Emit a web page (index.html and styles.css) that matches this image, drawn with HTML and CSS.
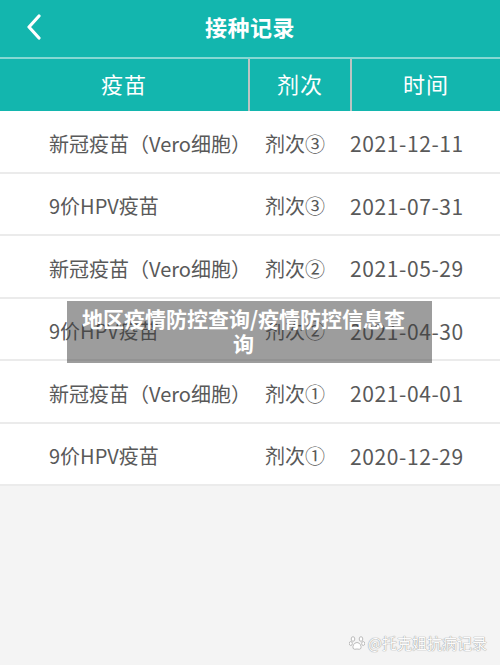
FILE: index.html
```html
<!DOCTYPE html>
<html lang="zh-CN">
<head>
<meta charset="utf-8">
<title>接种记录</title>
<link rel="stylesheet" href="styles.css">
</head>
<body>
<div class="page">
  <header class="topbar">
    <svg class="back" width="18" height="26" viewBox="0 0 18 26"><path d="M14 2 L4 13 L14 24" fill="none" stroke="#fff" stroke-width="3.2" stroke-linecap="round" stroke-linejoin="round"/></svg>
    <h1 class="title">接种记录</h1>
  </header>
  <div class="thead">
    <div class="th">疫苗</div>
    <div class="th th-div">剂次</div>
    <div class="th th-div">时间</div>
  </div>
  <div class="tbody">
    <div class="row"><span>新冠疫苗（Vero细胞）</span><span>剂次③</span><span class="date">2021-12-11</span></div>
    <div class="row"><span>9价HPV疫苗</span><span>剂次③</span><span class="date">2021-07-31</span></div>
    <div class="row"><span>新冠疫苗（Vero细胞）</span><span>剂次②</span><span class="date">2021-05-29</span></div>
    <div class="row"><span>9价HPV疫苗</span><span>剂次②</span><span class="date">2021-04-30</span></div>
    <div class="row"><span>新冠疫苗（Vero细胞）</span><span>剂次①</span><span class="date">2021-04-01</span></div>
    <div class="row"><span>9价HPV疫苗</span><span>剂次①</span><span class="date">2020-12-29</span></div>
  </div>
  <div class="caption">地区疫情防控查询/疫情防控信息查询</div>
  <div class="watermark">
    <svg class="paw" width="16" height="16" viewBox="0 0 16 16"><g fill="#fff" stroke="#bbb" stroke-width="1"><ellipse cx="4" cy="4" rx="1.8" ry="2.3"/><ellipse cx="12" cy="4" rx="1.8" ry="2.3"/><ellipse cx="1.8" cy="8.5" rx="1.5" ry="2"/><ellipse cx="14.2" cy="8.5" rx="1.5" ry="2"/><path d="M8 7.5 C5 7.5 3.5 11 4 13 C4.5 15 7 14 8 14 C9 14 11.5 15 12 13 C12.5 11 11 7.5 8 7.5 Z"/></g></svg>
    <span>@托克姐抗病记录</span>
  </div>
</div>
</body>
</html>
```
FILE: styles.css
```css
* { box-sizing: border-box; }
html, body { margin: 0; padding: 0; }
body {
  font-family: "Noto Sans CJK SC", "Noto Sans", sans-serif;
  background: #f4f4f4;
}
.page {
  position: relative;
  width: 500px;
  height: 665px;
  overflow: hidden;
  background: #f4f4f4;
}
.topbar {
  height: 59px;
  background: #13b6ae;
  display: flex;
  align-items: center;
  justify-content: center;
  position: relative;
  padding-bottom: 6px;
  border-bottom: 2px solid #86d8d3;
}
.back {
  position: absolute;
  left: 25px;
  top: 14px;
}
.title {
  margin: 0;
  color: #fff;
  font-size: 22px;
  font-weight: 700;
  letter-spacing: 0.5px;
}
.thead {
  display: grid;
  grid-template-columns: 248px 102px 1fr;
  height: 52px;
  background: #13b6ae;
}
.th {
  display: flex;
  align-items: center;
  justify-content: center;
  padding-bottom: 5px;
  color: #fff;
  font-size: 22px;
  letter-spacing: 1px;
}
.th-div {
  border-left: 2px solid #bcc4c3;
}
.tbody {
  background: #fff;
}
.row {
  display: grid;
  grid-template-columns: 216px 85px 1fr;
  align-items: center;
  height: 62.5px;
  padding-left: 49px;
  padding-top: 4px;
  border-bottom: 2px solid #ebebeb;
  color: #595959;
  font-size: 20px;
  white-space: nowrap;
}
.date {
  font-size: 21px;
  letter-spacing: 0.6px;
}
.caption {
  position: absolute;
  left: 67px;
  top: 301px;
  width: 365px;
  height: 62px;
  padding: 5px 22px 0 10px;
  background: rgba(60, 60, 60, 0.5);
  color: #fff;
  font-size: 21px;
  font-weight: 700;
  line-height: 25px;
  text-align: center;
}
.watermark {
  position: absolute;
  right: 13px;
  bottom: 12px;
  display: flex;
  align-items: center;
  gap: 3px;
  font-size: 15px;
  color: #fbfbfb;
  text-shadow: 0 0 1px #9a9a9a, 0 0 1px #9a9a9a;
}
```
